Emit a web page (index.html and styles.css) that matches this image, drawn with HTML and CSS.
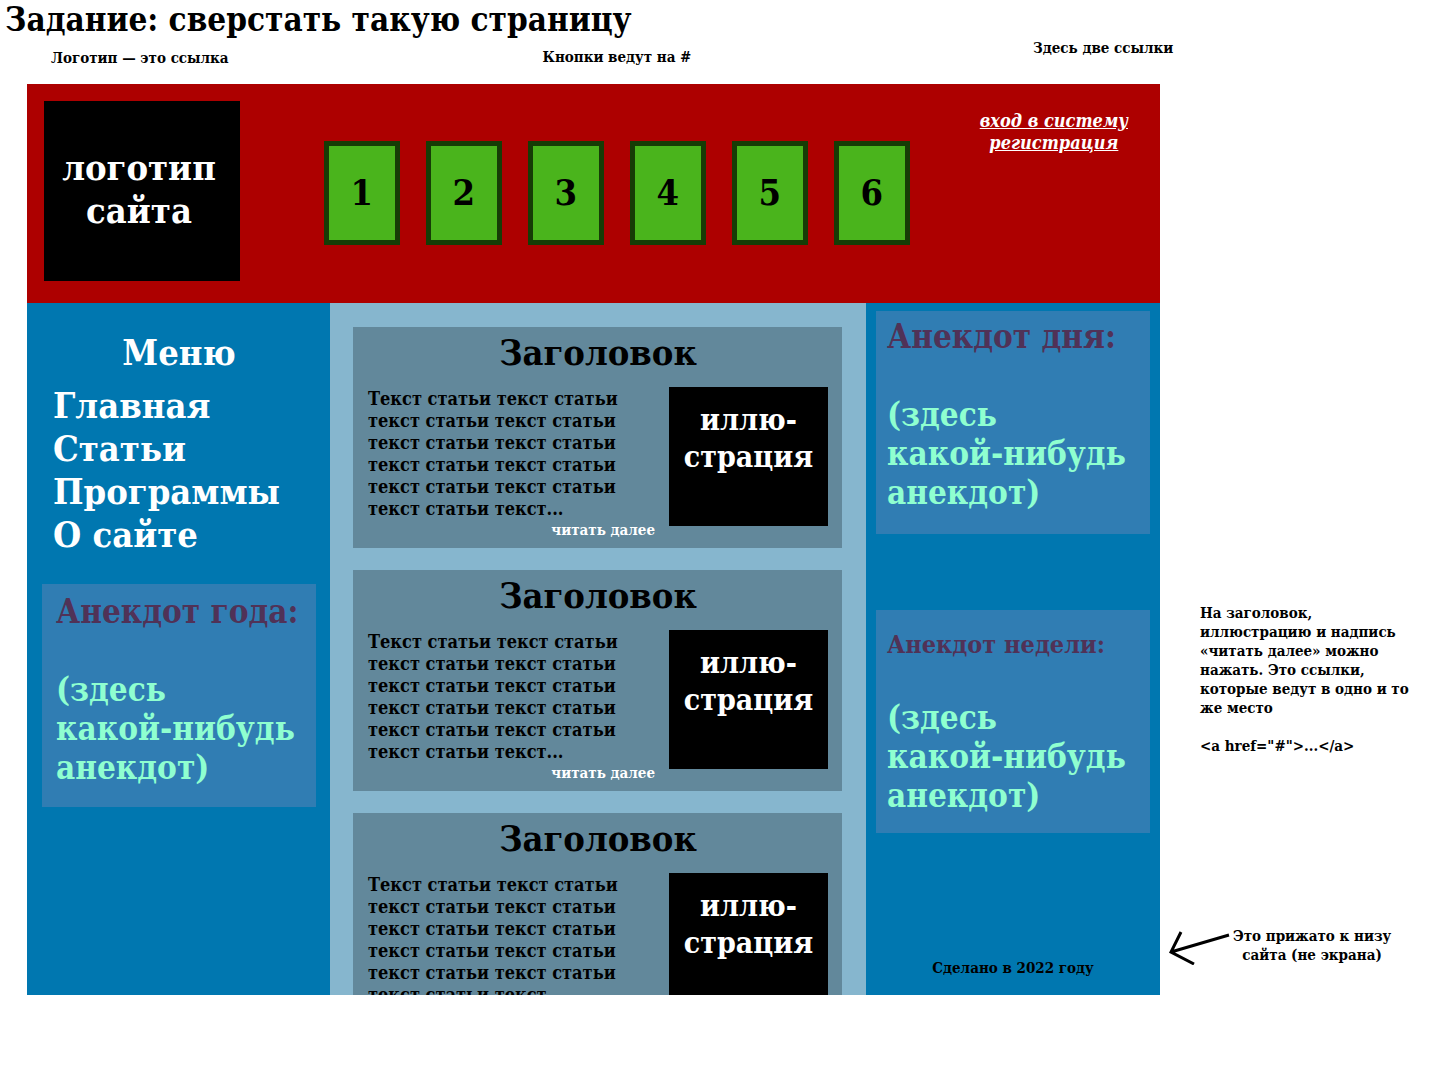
FILE: index.html
```html
<!DOCTYPE html>
<html lang="ru">
<head>
<meta charset="utf-8">
<title>Задание: сверстать такую страницу</title>
<link rel="stylesheet" href="styles.css">
</head>
<body>
<div class="page">
  <h1 class="task">Задание: сверстать такую страницу</h1>
  <div class="hints">
    <p class="hint hint-logo">Логотип — это ссылка</p>
    <p class="hint hint-buttons">Кнопки ведут на #</p>
    <p class="hint hint-links">Здесь две ссылки</p>
  </div>
  <div class="board">
    <div class="site">
      <header class="header">
        <a class="logo" href="#">логотип<br>сайта</a>
        <nav class="buttons">
          <a class="button" href="#">1</a>
          <a class="button" href="#">2</a>
          <a class="button" href="#">3</a>
          <a class="button" href="#">4</a>
          <a class="button" href="#">5</a>
          <a class="button" href="#">6</a>
        </nav>
        <div class="account">
          <a href="#">вход в систему</a>
          <a href="#">регистрация</a>
        </div>
      </header>
      <div class="columns">
        <div class="left">
          <nav class="menu">
            <h2 class="menu-title">Меню</h2>
            <a href="#">Главная</a>
            <a href="#">Статьи</a>
            <a href="#">Программы</a>
            <a href="#">О сайте</a>
          </nav>
          <section class="joke joke-year">
            <h2 class="joke-title">Анекдот года:</h2>
            <p class="joke-text">(здесь<br>какой-нибудь<br>анекдот)</p>
          </section>
        </div>
        <main class="articles">
          <article class="article">
            <h2 class="article-title"><a href="#">Заголовок</a></h2>
            <div class="article-body">
              <div class="article-main">
                <p class="article-text">Текст статьи текст статьи<br>текст статьи текст статьи<br>текст статьи текст статьи<br>текст статьи текст статьи<br>текст статьи текст статьи<br>текст статьи текст...</p>
                <a class="more" href="#">читать далее</a>
              </div>
              <a class="picture" href="#">иллю-<br>страция</a>
            </div>
          </article>
          <article class="article">
            <h2 class="article-title"><a href="#">Заголовок</a></h2>
            <div class="article-body">
              <div class="article-main">
                <p class="article-text">Текст статьи текст статьи<br>текст статьи текст статьи<br>текст статьи текст статьи<br>текст статьи текст статьи<br>текст статьи текст статьи<br>текст статьи текст...</p>
                <a class="more" href="#">читать далее</a>
              </div>
              <a class="picture" href="#">иллю-<br>страция</a>
            </div>
          </article>
          <article class="article">
            <h2 class="article-title"><a href="#">Заголовок</a></h2>
            <div class="article-body">
              <div class="article-main">
                <p class="article-text">Текст статьи текст статьи<br>текст статьи текст статьи<br>текст статьи текст статьи<br>текст статьи текст статьи<br>текст статьи текст статьи<br>текст статьи текст...</p>
                <a class="more" href="#">читать далее</a>
              </div>
              <a class="picture" href="#">иллю-<br>страция</a>
            </div>
          </article>
        </main>
        <div class="right">
          <section class="joke joke-day">
            <h2 class="joke-title">Анекдот дня:</h2>
            <p class="joke-text">(здесь<br>какой-нибудь<br>анекдот)</p>
          </section>
          <section class="joke joke-week">
            <h2 class="joke-title">Анекдот недели:</h2>
            <p class="joke-text">(здесь<br>какой-нибудь<br>анекдот)</p>
          </section>
          <footer class="footer">Сделано в 2022 году</footer>
        </div>
      </div>
    </div>
    <aside class="notes">
      <div class="note">
        <p>На заголовок,<br>иллюстрацию и надпись<br>«читать далее» можно<br>нажать. Это ссылки,<br>которые ведут в одно и то<br>же место</p>
        <p>&lt;a href="#"&gt;...&lt;/a&gt;</p>
      </div>
      <div class="note-bottom">
        <svg class="arrow" width="62" height="38" viewBox="0 0 62 38" fill="none" stroke="#000" stroke-width="3" aria-hidden="true"><path d="M60 8 2 25M12 5 2 25 25 37"/></svg>
        <p>Это прижато к низу<br>сайта (не экрана)</p>
      </div>
    </aside>
  </div>
</div>
</body>
</html>
```
FILE: styles.css
```css
* {
  box-sizing: border-box;
}

body {
  margin: 0;
  background: #fff;
  color: #000;
  font: bold 15px/19px "DejaVu Serif Condensed", "DejaVu Serif", serif;
}

h1, h2, p {
  margin: 0;
  font-weight: bold;
}

a {
  color: inherit;
  text-decoration: none;
}

.page {
  display: flex;
  flex-direction: column;
  height: 100vh;
  padding-bottom: 85px;
}

.task {
  padding-left: 5px;
  font-size: 33px;
  line-height: 39px;
}

.hints {
  display: grid;
  grid-template-columns: 281px minmax(0, 1fr) 491px;
  height: 45px;
  align-items: start;
}

.hint-logo {
  padding: 10px 0 0 51px;
}

.hint-buttons {
  padding-top: 9px;
  text-align: center;
}

.hint-links {
  padding-left: 80px;
}

.board {
  display: grid;
  grid-template-columns: minmax(0, 1fr) 284px;
  grid-template-rows: minmax(0, 1fr);
  flex: 1;
  min-height: 0;
  padding-left: 27px;
}

.site {
  display: flex;
  flex-direction: column;
  overflow: hidden;
}

.header {
  display: flex;
  flex: none;
  justify-content: space-between;
  padding: 17px 32px 22px 17px;
  background: #ad0000;
}

.logo {
  display: flex;
  align-items: center;
  justify-content: center;
  width: 196px;
  height: 180px;
  padding: 0 6px 4px 0;
  background: #000;
  color: #fff;
  font-size: 36px;
  line-height: 43px;
  text-align: center;
}

.buttons {
  display: flex;
  gap: 26px;
  padding: 40px 0 0 14px;
}

.button {
  display: flex;
  align-items: center;
  justify-content: center;
  width: 76px;
  height: 104px;
  padding-bottom: 2px;
  border: 5px solid #163c06;
  background: #4ab41c;
  font-size: 36px;
  line-height: 43px;
}

.account {
  display: flex;
  flex-direction: column;
  align-items: center;
  padding-top: 9px;
  color: #fff;
  font-size: 18px;
  font-style: italic;
  line-height: 22px;
}

.account a {
  text-decoration: underline;
}

.columns {
  display: grid;
  grid-template-columns: 303px minmax(0, 1fr) 294px;
  grid-template-rows: minmax(0, 1fr);
  flex: 1;
  min-height: 0;
}

.left {
  padding: 28px 14px 0 15px;
  background: #0077b0;
}

.menu {
  display: flex;
  flex-direction: column;
  padding: 0 11px 28px;
  color: #fff;
  font-size: 36px;
  line-height: 43px;
}

.menu-title {
  padding-bottom: 10px;
  font-size: 36px;
  text-align: center;
}

.joke {
  background: #307db3;
  font-size: 33px;
  line-height: 39px;
}

.joke-year {
  padding: 8px 14px 20px;
}

.joke-day {
  padding: 6px 11px 22px;
}

.joke-week {
  padding: 10px 11px 18px;
}

.joke-title {
  height: 78px;
  color: #503257;
  font-size: 33px;
}

.joke-week .joke-title {
  padding-top: 5px;
  font-size: 25px;
}

.joke-text {
  color: #8fffd0;
}

.articles {
  display: flex;
  flex-direction: column;
  gap: 22px;
  padding: 24px 24px 0 23px;
  background: #86b6ce;
}

.article {
  flex: none;
  padding: 4px 14px 8px 15px;
  background: #62889b;
}

.article-title {
  padding-bottom: 13px;
  font-size: 36px;
  line-height: 43px;
  text-align: center;
}

.article-body {
  display: flex;
  justify-content: space-between;
}

.article-main {
  display: flex;
  flex-direction: column;
  gap: 1px;
  width: 287px;
  padding-top: 1px;
}

.article-text {
  font-size: 18px;
  line-height: 22px;
}

.more {
  align-self: flex-end;
  color: #fff;
}

.picture {
  width: 159px;
  height: 139px;
  padding-top: 14px;
  background: #000;
  color: #fff;
  font-size: 30px;
  line-height: 37px;
  text-align: center;
}

.right {
  display: flex;
  flex-direction: column;
  gap: 76px;
  padding: 8px 10px 17px;
  background: #0077b0;
}

.footer {
  margin-top: auto;
  text-align: center;
}

.notes {
  display: flex;
  flex-direction: column;
  justify-content: space-between;
  padding: 520px 0 30px 9px;
}

.note {
  display: grid;
  gap: 19px;
  padding-left: 31px;
}

.note-bottom {
  display: flex;
  gap: 2px;
  text-align: center;
}
```
